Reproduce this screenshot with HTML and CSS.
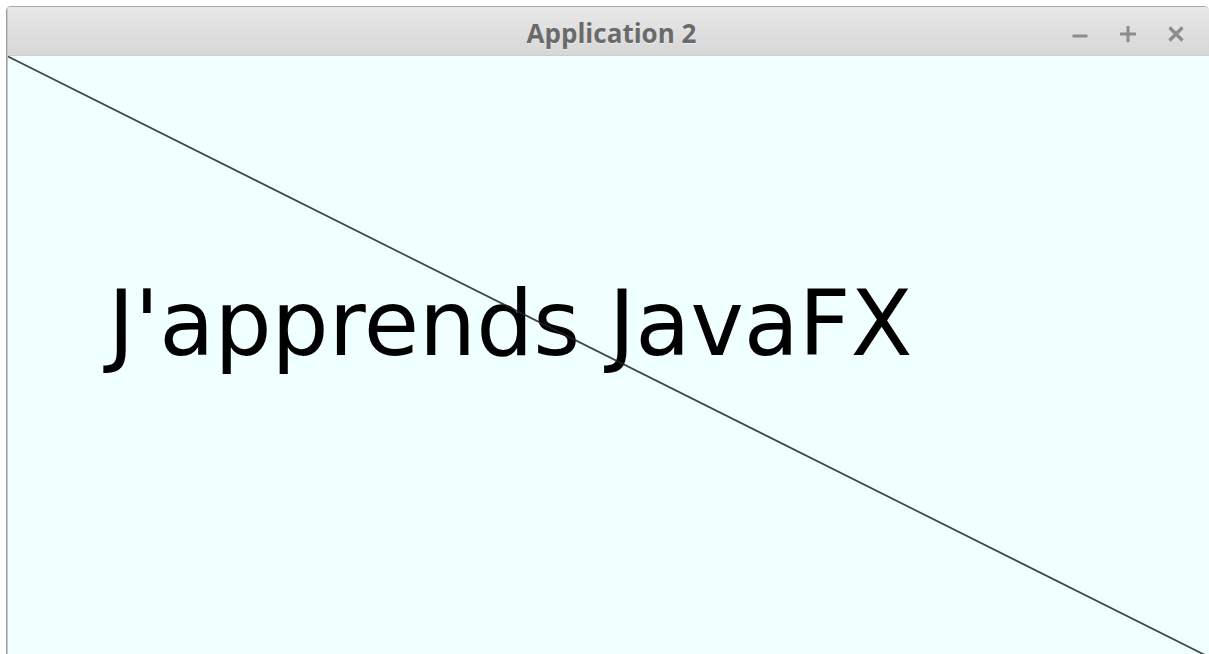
FILE: index.html
```html
<!DOCTYPE html>
<html lang="fr">
<head>
<meta charset="utf-8">
<title>Application 2</title>
<link rel="stylesheet" href="styles.css">
</head>
<body>
<div class="window">
  <header class="titlebar">
    <span class="title">Application 2</span>
    <div class="controls">
      <svg class="ctl" viewBox="0 0 18 18" width="18" height="18"><path d="M1.5 11h15" /></svg>
      <svg class="ctl" viewBox="0 0 18 18" width="18" height="18"><path d="M9 1v16M1 9h16" /></svg>
      <svg class="ctl ctl-close" viewBox="0 0 18 18" width="18" height="18"><path d="M2.5 2.5l13 13M15.5 2.5l-13 13" /></svg>
    </div>
  </header>
  <main class="scene">
    <svg class="stroke" viewBox="0 0 1201 598" preserveAspectRatio="none">
      <line x1="0" y1="0.5" x2="1200" y2="600.5" />
    </svg>
    <p class="caption">J'apprends JavaFX</p>
  </main>
</div>
</body>
</html>
```
FILE: styles.css
```css
html, body {
  margin: 0;
  padding: 0;
  background: #ffffff;
  height: 100%;
  overflow: hidden;
}

.window {
  margin: 6px 0 0 6px;
  height: 648px;
  display: flex;
  flex-direction: column;
  border-left: 1px solid #9c9c9c;
  border-top: 1px solid #a8a8a8;
  border-radius: 5px 5px 0 0;
  background: #f0ffff;
  overflow: hidden;
}

.titlebar {
  flex: 0 0 49px;
  position: relative;
  display: flex;
  align-items: center;
  justify-content: center;
  background: linear-gradient(#e8e8e8, #d7d7d7);
  border-left: 1px solid #c9c9c9;
  border-bottom: 1px solid #cdcdcd;
  box-sizing: border-box;
}

.title {
  font-family: "Open Sans", "DejaVu Sans", sans-serif;
  font-weight: 700;
  font-size: 26px;
  color: #6a6a6a;
  text-shadow: 0 1px 0 rgba(255, 255, 255, 0.5);
  margin-left: 6px;
  margin-top: 4px;
}

.controls {
  position: absolute;
  right: 24px;
  top: 18px;
  display: flex;
  gap: 30px;
}

.ctl {
  display: block;
  fill: none;
  stroke: #8c8c8c;
  stroke-width: 3;
  stroke-linecap: butt;
}

.ctl-close {
  stroke-width: 3.4;
}

.scene {
  flex: 1;
  position: relative;
  border-left: 1px solid #c8c8c8;
}

.stroke {
  position: absolute;
  left: 0;
  top: 0;
  width: 1201px;
  height: 598px;
  overflow: visible;
}

.stroke line {
  stroke: #222;
  stroke-width: 1.7;
  opacity: 0.85;
}

.caption {
  margin: 0;
  padding: 223px 0 0 100px;
  font-family: "DejaVu Sans", sans-serif;
  font-size: 90px;
  line-height: 90px;
  color: #000;
  white-space: nowrap;
}
```
